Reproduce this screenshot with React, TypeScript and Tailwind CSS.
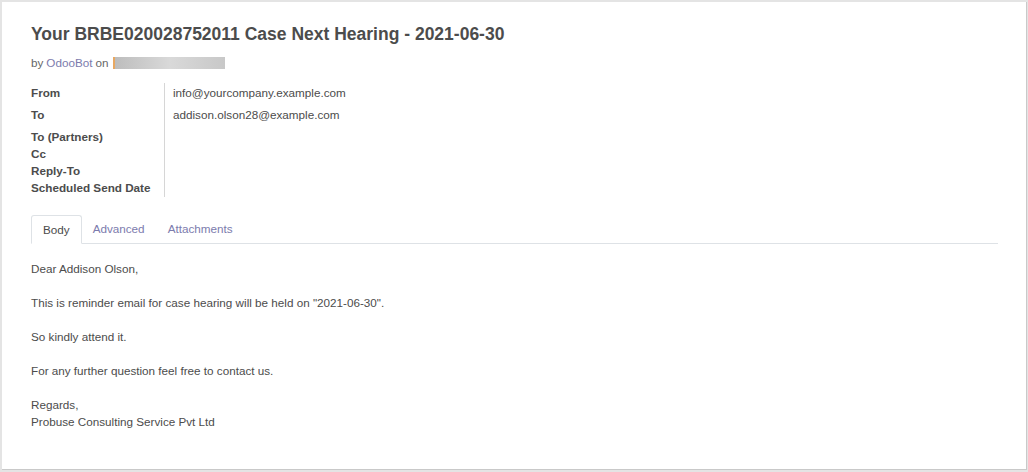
import React from "react";

export default function App() {
  const font = { fontFamily: '"Liberation Sans", Arial, sans-serif' };
  return (
    <div
      className="w-[1028px] h-[472px] bg-[#e4e4e4] pt-[2px] pl-[2px] pr-[1px] pb-[2px]"
      style={font}
    >
      <div className="h-full w-full bg-white border-r border-b border-[#c9c9c9] pl-[29px] pr-[28px] pt-[20px]">
        <h1 className="text-[17.5px] font-bold text-[#4c4c4c] leading-[24px]">
          Your BRBE020028752011 Case Next Hearing - 2021-06-30
        </h1>
        <div className="mt-[8px] flex items-center text-[11.7px] leading-[18px] text-[#666666]">
          <span>by </span>
          <span className="text-[#7c7bad] ml-[3px]">OdooBot</span>
          <span className="ml-[3px]">on</span>
          <span className="ml-[4px] inline-block h-[12px] w-[112px] bg-gradient-to-r from-[#bdbdbd] via-[#d9d9d9] to-[#c8c8c8] border-l-[2px] border-[#e8a862]" />
        </div>
        <div className="mt-[11px] flex text-[11.7px] text-[#4c4c4c]">
          <div className="w-[134px] border-r border-[#d6d6d6] font-bold leading-[17px] pb-[1px]">
            <div className="h-[22px] pt-[1px]">From</div>
            <div className="h-[23px] pt-[1px]">To</div>
            <div>To (Partners)</div>
            <div>Cc</div>
            <div>Reply-To</div>
            <div>Scheduled Send Date</div>
          </div>
          <div className="pl-[8px] leading-[17px]">
            <div className="h-[22px] pt-[1px]">info@yourcompany.example.com</div>
            <div className="h-[22px] pt-[1px]">addison.olson28@example.com</div>
          </div>
        </div>
        <div className="mt-[18px] flex border-b border-[#dee2e6] text-[11.7px]">
          <div className="-mb-px h-[29px] px-[11px] flex items-center border border-[#dee2e6] border-b-white rounded-t-[3px] bg-white text-[#4c4c4c]">
            Body
          </div>
          <div className="h-[28px] px-[11px] flex items-center text-[#7c7bad]">Advanced</div>
          <div className="h-[28px] px-[12px] flex items-center text-[#7c7bad]">Attachments</div>
        </div>
        <div className="pt-[16px] text-[11.7px] leading-[17px] text-[#4c4c4c]">
          <p className="mb-[17px]">Dear Addison Olson,</p>
          <p className="mb-[17px]">This is reminder email for case hearing will be held on "2021-06-30".</p>
          <p className="mb-[17px]">So kindly attend it.</p>
          <p className="mb-[17px]">For any further question feel free to contact us.</p>
          <p>
            Regards,
            <br />
            Probuse Consulting Service Pvt Ltd
          </p>
        </div>
      </div>
    </div>
  );
}
